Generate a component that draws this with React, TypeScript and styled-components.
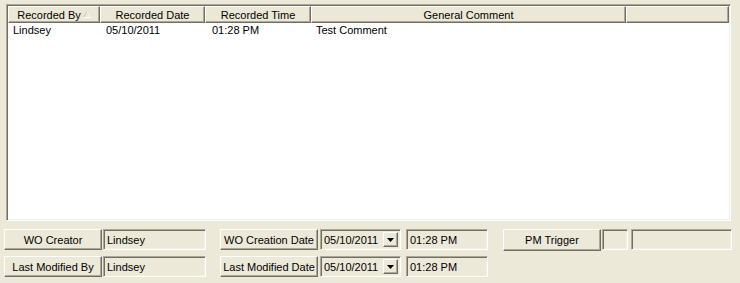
import React, { FC } from 'react';
import styled, { createGlobalStyle } from 'styled-components';

const GlobalStyle = createGlobalStyle`
  html, body {
    margin: 0;
    padding: 0;
    background: #ece9d8;
  }
  body {
    font-family: 'Liberation Sans', Arial, sans-serif;
    font-size: 11px;
    color: #000;
  }
`;

const Page = styled.div`
  width: 740px;
  height: 283px;
  background: #ece9d8;
  padding-top: 4px;
  box-sizing: border-box;
  overflow: hidden;
`;

const Grid = styled.div`
  margin-left: 6px;
  width: 725px;
  height: 217px;
  box-sizing: border-box;
  border: 1px solid;
  border-color: #aca899 #fff #fff #aca899;
  box-shadow: inset 1px 1px 0 #716f64, inset -1px -1px 0 #f1efe2;
  background: #fff;
  padding: 1px;
`;

const cols = '92px 105px 106px 315px 103px';

const HeaderRow = styled.div`
  display: grid;
  grid-template-columns: ${cols};
  height: 17px;
`;

const HeaderCell = styled.div`
  display: flex;
  align-items: center;
  justify-content: center;
  gap: 2px;
  background: #ebe8d7;
  box-sizing: border-box;
  border: 1px solid;
  border-color: #fff #716f64 #716f64 #fff;
  box-shadow: inset -1px -1px 0 #aca899;
  white-space: nowrap;
`;

const DataRow = styled.div`
  display: grid;
  grid-template-columns: ${cols};
  height: 14px;
`;

const DataCell = styled.div<{ $pl: number }>`
  padding-left: ${(p) => p.$pl}px;
  line-height: 14px;
  white-space: nowrap;
`;

const Form = styled.div`
  margin-top: 8px;
  display: flex;
  flex-direction: column;
  gap: 5px;
`;

const FormRow = styled.div`
  display: flex;
  align-items: flex-start;
`;

const Button = styled.div<{ $w: number; $ml?: number; $h?: number }>`
  width: ${(p) => p.$w}px;
  height: ${(p) => p.$h ?? 21}px;
  margin-left: ${(p) => p.$ml ?? 0}px;
  box-sizing: border-box;
  display: flex;
  align-items: center;
  justify-content: center;
  background: #ece9d8;
  border: 1px solid;
  border-color: #fff #716f64 #716f64 #fff;
  box-shadow: inset -1px -1px 0 #aca899;
  white-space: nowrap;
`;

const Field = styled.div<{ $w: number; $ml?: number }>`
  width: ${(p) => p.$w}px;
  height: 21px;
  margin-left: ${(p) => p.$ml ?? 0}px;
  box-sizing: border-box;
  display: flex;
  align-items: center;
  padding-left: 3px;
  background: #ece9d8;
  border: 1px solid;
  border-color: #aca899 #fff #fff #aca899;
  box-shadow: inset 1px 1px 0 #716f64, inset -1px -1px 0 #f1efe2;
  white-space: nowrap;
`;

const Combo = styled(Field)`
  justify-content: space-between;
  padding-right: 2px;
`;

const DropButton = styled.div`
  width: 15px;
  height: 15px;
  box-sizing: border-box;
  display: flex;
  align-items: center;
  justify-content: center;
  background: #ece9d8;
  border: 1px solid;
  border-color: #fff #716f64 #716f64 #fff;
  box-shadow: inset -1px -1px 0 #aca899;
`;

const SortArrow: FC = () => (
  <svg width="8" height="7" viewBox="0 0 8 7">
    <path d="M0.5 6.5 L4 0.5 L7.5 6.5 Z" fill="none" stroke="#c8c5b5" strokeWidth="1" />
    <path d="M4 0.5 L7.5 6.5 H0.5" fill="none" stroke="#fff" strokeWidth="1" />
  </svg>
);

const DownArrow: FC = () => (
  <svg width="7" height="4" viewBox="0 0 7 4">
    <path d="M0 0 H7 L3.5 4 Z" fill="#000" />
  </svg>
);

const headers = ['Recorded By', 'Recorded Date', 'Recorded Time', 'General Comment', ''];
const cellPad = [5, 6, 7, 5, 5];
const rows = [['Lindsey', '05/10/2011', '01:28 PM', 'Test Comment', '']];

const DateCombo: FC<{ value: string }> = ({ value }) => (
  <Combo $w={81} $ml={2}>
    <span>{value}</span>
    <DropButton>
      <DownArrow />
    </DropButton>
  </Combo>
);

const App: FC = () => (
  <Page>
    <GlobalStyle />
    <Grid>
      <HeaderRow>
        {headers.map((h, i) => (
          <HeaderCell key={i}>
            {h}
            {i === 0 && <SortArrow />}
          </HeaderCell>
        ))}
      </HeaderRow>
      {rows.map((r, ri) => (
        <DataRow key={ri}>
          {r.map((c, ci) => (
            <DataCell key={ci} $pl={cellPad[ci]}>
              {c}
            </DataCell>
          ))}
        </DataRow>
      ))}
    </Grid>
    <Form>
      <FormRow>
        <Button $w={98} $ml={4}>WO Creator</Button>
        <Field $w={103} $ml={1}>Lindsey</Field>
        <Button $w={98} $ml={14}>WO Creation Date</Button>
        <DateCombo value="05/10/2011" />
        <Field $w={82} $ml={5}>01:28 PM</Field>
        <Button $w={98} $ml={15} $h={22}>PM Trigger</Button>
        <Field $w={26} $ml={1} />
        <Field $w={101} $ml={3} />
      </FormRow>
      <FormRow>
        <Button $w={98} $ml={4}>Last Modified By</Button>
        <Field $w={103} $ml={1}>Lindsey</Field>
        <Button $w={98} $ml={14}>Last Modified Date</Button>
        <DateCombo value="05/10/2011" />
        <Field $w={82} $ml={5}>01:28 PM</Field>
      </FormRow>
    </Form>
  </Page>
);

export default App;
